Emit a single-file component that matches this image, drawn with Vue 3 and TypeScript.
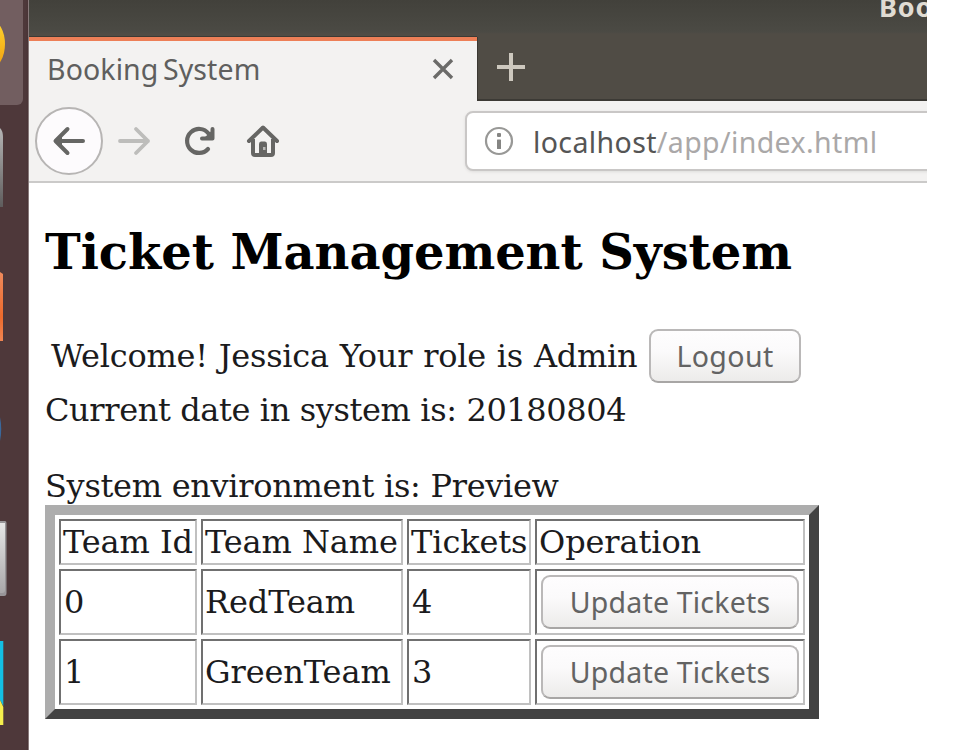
<script setup lang="ts">
interface Team {
  id: number
  name: string
  tickets: number
}

const teams: Team[] = [
  { id: 0, name: 'RedTeam', tickets: 4 },
  { id: 1, name: 'GreenTeam', tickets: 3 },
]
</script>

<template>
  <div class="desktop">
    <aside class="launcher">
      <svg width="29" height="750" viewBox="0 0 29 750">
        <defs>
          <linearGradient id="gold" x1="0" y1="0" x2="0" y2="1">
            <stop offset="0" stop-color="#ffd52e" />
            <stop offset="1" stop-color="#f0a010" />
          </linearGradient>
          <linearGradient id="steel" x1="0" y1="0" x2="0" y2="1">
            <stop offset="0" stop-color="#b5b5b5" />
            <stop offset="1" stop-color="#5e5c5c" />
          </linearGradient>
          <linearGradient id="orange" x1="0" y1="0" x2="0" y2="1">
            <stop offset="0" stop-color="#ee8a5c" />
            <stop offset="0.65" stop-color="#ec6a2c" />
            <stop offset="1" stop-color="#ef8552" />
          </linearGradient>
          <linearGradient id="silver" x1="0" y1="0" x2="0" y2="1">
            <stop offset="0" stop-color="#e6e6e6" />
            <stop offset="1" stop-color="#a9a7a9" />
          </linearGradient>
        </defs>
        <rect x="-10" y="-10" width="33" height="115" rx="6" fill="#725e60" />
        <ellipse cx="-8" cy="44" rx="13" ry="23" fill="url(#gold)" />
        <path d="M0 128Q3 131 3 137V207H0Z" fill="url(#steel)" />
        <path d="M0 272L3 274V341H0Z" fill="url(#orange)" />
        <path d="M0 417Q2.500 429 0 441Z" fill="#3a689c" />
        <path d="M0 521H5Q6.500 521 6.500 523V593Q6.500 596 4 596H0Z" fill="#989598" />
        <path d="M0 523H5V590Q5 593 2 593H0Z" fill="url(#silver)" />
        <path d="M0 641H3.300V706L0 700Z" fill="#13bfe3" />
        <path d="M0 700L3.300 707V725H0Z" fill="#f5ef4d" />
      </svg>
    </aside>

    <main class="window">
      <header class="tabstrip">
        <div class="caption">Boo</div>
        <div class="tabs">
          <div class="tab">
            <span class="tab-label">Booking System</span>
            <svg class="tab-close" width="22" height="22" viewBox="0 0 22 22">
              <path d="M2 2L20 20M20 2L2 20" stroke="#6b6b69" stroke-width="3.400" fill="none" />
            </svg>
          </div>
          <svg class="new-tab" width="28" height="28" viewBox="0 0 28 28">
            <path d="M0 14H28M14 0V28" stroke="#cdc8be" stroke-width="4" fill="none" />
          </svg>
        </div>
      </header>

      <nav class="toolbar">
        <div class="back">
          <svg width="34" height="30" viewBox="0 0 34 30">
            <path d="M31 15H4M15.500 3L3.500 15L15.500 27" fill="none" stroke="#666664" stroke-width="4" stroke-linecap="round" stroke-linejoin="round" />
            <path d="M3 15L10 9V21Z" fill="#666664" />
          </svg>
        </div>
        <svg class="forward" width="34" height="30" viewBox="0 0 34 30">
          <path d="M2 15H30M18 3L30 15L18 27" fill="none" stroke="#bdbdbb" stroke-width="3.800" stroke-linecap="round" stroke-linejoin="round" />
        </svg>
        <svg class="reload" width="32" height="32" viewBox="0 0 32 32">
          <path d="M24 24A12 12 0 1 1 24.500 8.500" fill="none" stroke="#666664" stroke-width="4.200" stroke-linecap="round" />
          <path d="M28.500 4V13.500H18" fill="none" stroke="#666664" stroke-width="4" stroke-linecap="round" stroke-linejoin="round" />
          <path d="M19 14L28.500 5V14Z" fill="#666664" />
        </svg>
        <svg class="home" width="34" height="34" viewBox="0 0 34 34">
          <path d="M3 18L17 4.500L31 18" fill="none" stroke="#666664" stroke-width="4" stroke-linecap="round" stroke-linejoin="round" />
          <path d="M7 16V30Q7 32 9 32H25Q27 32 27 30V16" fill="none" stroke="#666664" stroke-width="4" />
          <path d="M13 32V21Q13 18.500 15 18.500H19Q21 18.500 21 21V32Z" fill="#666664" />
          <rect x="17" y="24" width="2.500" height="3" fill="#b9b9b7" />
        </svg>
        <div class="address">
          <svg class="info" width="30" height="30" viewBox="0 0 30 30">
            <circle cx="15" cy="15" r="13" fill="none" stroke="#989896" stroke-width="2.200" />
            <rect x="13" y="7" width="4" height="4" rx="1" fill="#858583" />
            <rect x="13" y="13.500" width="4" height="9.500" rx="0.500" fill="#858583" />
          </svg>
          <span class="url"><span class="host">localhost</span>/app/index.html</span>
        </div>
      </nav>

      <section class="page">
        <h1>Ticket Management System</h1>
        <div class="welcome">
          <span class="greeting">Welcome! Jessica Your role is Admin</span>
          <button class="btn logout">Logout</button>
        </div>
        <p class="date">Current date in system is: 20180804</p>
        <p class="env">System environment is: Preview</p>
        <table>
          <colgroup>
            <col class="c-id" />
            <col class="c-name" />
            <col class="c-tickets" />
            <col class="c-op" />
          </colgroup>
          <tbody>
            <tr class="head">
              <td>Team Id</td>
              <td>Team Name</td>
              <td>Tickets</td>
              <td>Operation</td>
            </tr>
            <tr v-for="team in teams" :key="team.id">
              <td class="num">{{ team.id }}</td>
              <td class="name">{{ team.name }}</td>
              <td class="num">{{ team.tickets }}</td>
              <td class="op"><button class="btn update">Update Tickets</button></td>
            </tr>
          </tbody>
        </table>
      </section>
    </main>
  </div>
</template>

<style>
body {
  margin: 0;
  background: #fff;
}
</style>

<style scoped>
.desktop {
  display: flex;
  width: 977px;
  height: 750px;
  overflow: hidden;
  background: #fff;
}
.launcher {
  box-sizing: border-box;
  flex: none;
  width: 29px;
  background: linear-gradient(90deg, #4e383a 0, #4e383a 26px, #493335 28px, #887a7b 28px);
}
.launcher svg {
  display: block;
}
.window {
  flex: none;
  width: 898px;
  overflow: hidden;
  font-family: "Noto Sans", sans-serif;
}
.tabstrip {
  height: 101px;
  overflow: hidden;
  background: linear-gradient(#42413b 0, #4b4a44 32px, #504c45 34px, #504c45 99px, #3c3a35 99px);
}
.caption {
  height: 37px;
  padding-left: 850px;
  overflow: hidden;
  color: #e0dcd3;
  font-size: 27px;
  font-weight: 700;
  line-height: 13px;
  letter-spacing: 0.8px;
  white-space: nowrap;
}
.tabs {
  display: flex;
}
.tab {
  box-sizing: border-box;
  display: flex;
  flex: none;
  align-items: center;
  width: 448px;
  height: 64px;
  padding: 0 23px 4px 18px;
  background: #f3f2f1;
  border-top: 4px solid #ed7f57;
  box-shadow: 0 -1px #3c3a35, 1px 0 #3b3833;
}
.tab-label {
  flex: 1;
  color: #5f5f5e;
  font-size: 28.500px;
  line-height: 40px;
  letter-spacing: 0.1px;
  word-spacing: -3px;
  white-space: nowrap;
}
.new-tab {
  margin: 16px 0 0 20px;
}
.toolbar {
  box-sizing: border-box;
  display: flex;
  align-items: flex-start;
  height: 82px;
  background: #f3f2f1;
  border-bottom: 2px solid #cbcac9;
}
.toolbar svg {
  flex: none;
}
.back {
  box-sizing: border-box;
  display: flex;
  flex: none;
  align-items: center;
  justify-content: center;
  width: 68px;
  height: 68px;
  margin: 6px 0 0 6px;
  background: #fdfbfd;
  border: 2px solid #b7b5b4;
  border-radius: 50%;
}
.forward {
  margin: 25px 0 0 15px;
}
.reload {
  margin: 24px 0 0 32px;
}
.home {
  margin: 22px 0 0 30px;
}
.address {
  box-sizing: border-box;
  display: flex;
  flex: none;
  align-items: center;
  width: 520px;
  height: 60px;
  margin: 10px 0 0 185px;
  padding-left: 17px;
  background: #fff;
  border: 2px solid #c9c7c6;
  border-radius: 8px;
  box-shadow: 0 1px 3px #dedddb;
}
.url {
  margin: 2px 0 0 19px;
  color: #aaa8a8;
  font-size: 28.500px;
  line-height: 40px;
  letter-spacing: 0.38px;
  white-space: nowrap;
}
.host {
  color: #555;
}
.page {
  padding: 0 0 0 16px;
  color: #1b1b1d;
  font-family: "DejaVu Serif", serif;
  font-size: 32px;
}
h1 {
  height: 79px;
  margin: 41px 0 24px;
  color: #000;
  font-size: 48px;
  font-weight: 700;
  line-height: 57px;
  letter-spacing: -0.060px;
  white-space: nowrap;
}
.welcome {
  display: flex;
  align-items: center;
  height: 58px;
  padding-left: 6px;
}
.greeting {
  flex: none;
  width: 598px;
  letter-spacing: -0.250px;
  word-spacing: 1px;
  white-space: nowrap;
}
.date,
.env {
  height: 37px;
  margin: 6px 0 0;
  line-height: 38px;
  letter-spacing: -0.380px;
  white-space: nowrap;
}
.env {
  margin-top: 39px;
  padding-bottom: 1px;
  letter-spacing: -0.300px;
}
.btn {
  box-sizing: border-box;
  display: block;
  flex: none;
  height: 54px;
  padding: 0;
  color: #636363;
  background: linear-gradient(#fefdfe, #fbfafb 40%, #ecebea);
  border: 2px solid #bab8b8;
  border-bottom-color: #a8a6a5;
  border-radius: 9px;
  font-family: "Noto Sans", sans-serif;
  font-size: 28.500px;
  line-height: 48px;
  letter-spacing: 0.2px;
  white-space: nowrap;
}
.logout {
  width: 152px;
  letter-spacing: 0.4px;
}
.update {
  width: 258px;
}
table {
  box-sizing: border-box;
  width: 774px;
  height: 214px;
  color: #1b1b1d;
  font-size: 32px;
  border: 10px solid;
  border-color: #adadad #424242 #424242 #adadad;
  border-spacing: 4px;
  border-collapse: separate;
  table-layout: fixed;
}
.c-id {
  width: 138px;
}
.c-name {
  width: 202px;
}
.c-tickets {
  width: 124px;
}
.c-op {
  width: 270px;
}
td {
  box-sizing: border-box;
  height: 66px;
  padding: 0 2px;
  overflow: hidden;
  border: 2px solid;
  border-color: #707070 #c0c0c0 #c0c0c0 #707070;
  line-height: 38px;
  vertical-align: middle;
  white-space: nowrap;
}
.head td {
  height: 46px;
  letter-spacing: -0.100px;
}
.num {
  padding-left: 3px;
}
.name {
  letter-spacing: -0.100px;
}
.op {
  padding: 0 0 0 4px;
}
</style>
